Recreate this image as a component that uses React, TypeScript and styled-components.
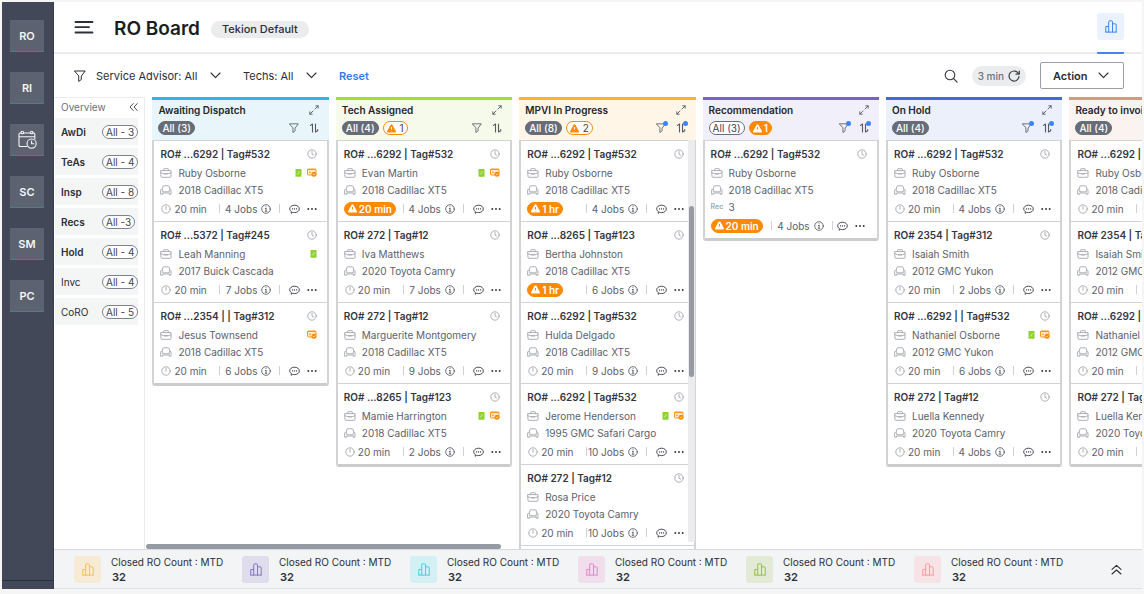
import React from "react";
import styled, { createGlobalStyle } from "styled-components";

const GlobalStyle = createGlobalStyle`
  * { box-sizing: border-box; }
  body {
    margin: 0;
    background: #f5f5f6;
    color: #2b2e35;
    font-family: Inter, "Open Sans", sans-serif;
    font-size: 10px;
    line-height: 16px;
  }
  button, select, input { font: inherit; color: inherit; }
  button { background: none; border: 0; padding: 0; cursor: pointer; }
  h1, h2, h3, p, ul, dl, dd { margin: 0; padding: 0; }
  ul { list-style: none; }
  svg { display: block; flex: none; }
`;

/* ---------- icons ---------- */

type IconProps = { w?: number; h?: number; sw?: number; box?: string; children?: React.ReactNode };

const Icon = ({ w = 12, h = w, sw = 1, box = `0 0 ${w} ${h}`, children }: IconProps) => (
  <svg width={w} height={h} viewBox={box} fill="none" stroke="currentColor" strokeWidth={sw} strokeLinecap="round" strokeLinejoin="round" aria-hidden="true">
    {children}
  </svg>
);

const MenuIcon = () => (
  <Icon w={20} h={14} sw={1.8}><path d="M1.5 2h17M1.5 7.200h13.500M1.5 12.500h17" /></Icon>
);
const FunnelIcon = ({ size = 12 }: { size?: number }) => (
  <Icon w={size} box="0 0 12 12" sw={1}><path d="M.8 1h10.4L7.3 6.2v3.3l-2.6 1.9V6.2z" /></Icon>
);
const ChevronIcon = () => <Icon w={11} h={7} sw={1.1}><path d="M1 1l4.5 4.7L10 1" /></Icon>;
const CollapseIcon = () => <Icon w={9} h={8} sw={0.9}><path d="M4.2.6L1 4l3.2 3.4M8.2.6L5 4l3.2 3.4" /></Icon>;
const ExpandUpIcon = () => <Icon w={11} h={11} sw={1.1}><path d="M1 5.3l4.5-4 4.5 4M1 10l4.5-4L10 10" /></Icon>;
const SearchIcon = () => <Icon w={14} sw={1.1}><circle cx="6" cy="6" r="4.8" /><path d="M9.5 9.5l3.6 3.6" /></Icon>;
const RefreshIcon = () => <Icon w={12} sw={1.2}><path d="M10.6 4A5 5 0 1 0 11 6.6M11.3 1v3.2H8" /></Icon>;
const BarsIcon = () => (
  <Icon w={12} h={13}><path d="M.8 12V6.5h2.9M3.7 12V1.8c0-.6.4-1 1-1h1.8c.6 0 1 .4 1 1V12M7.5 3.8h2.7c.6 0 1 .4 1 1V12M.8 12.1h10.4" /></Icon>
);
const CalendarIcon = () => (
  <Icon w={19} h={19} sw={1.1}>
    <path d="M9 16.5H2.2c-.8 0-1.2-.5-1.2-1.2V4.2C1 3.500 1.500 3 2.200 3H3M5.500 3h7M15 3h.6c.8 0 1.200.5 1.200 1.200V9M1 6.800h15.800" />
    <circle cx="4.300" cy="2.500" r="1.300" /><circle cx="13.700" cy="2.500" r="1.300" />
    <circle cx="13.600" cy="13.600" r="4.600" /><path d="M13.600 11v2.800h2.200" />
  </Icon>
);
const ArrowsIcon = () => (
  <Icon w={10} sw={0.9}><path d="M6 4L9 1M6.800.8h2.400v2.400M4 6L1 9M.8 6.800v2.400h2.400" /></Icon>
);
const SortIcon = () => (
  <Icon w={10} sw={1.1}><path d="M1.500 2.400L3.500 1v8M6.500 1v8l2.200-1.300V6.500" /></Icon>
);
const ClockIcon = () => <Icon w={10} sw={0.9}><circle cx="5" cy="5" r="4.200" /><path d="M5 2.400v2.800l1.700.9" /></Icon>;
const TimerIcon = () => <Icon w={10} sw={0.9}><circle cx="5" cy="5" r="4.200" /><path d="M5 2.200v3" /></Icon>;
const CaseIcon = () => (
  <Icon w={12} h={10} sw={0.9}><path d="M1 2.600h10v6c0 .4-.3.700-.7.700H1.700c-.4 0-.7-.3-.7-.7zM3.600 2.500V1.200c0-.3.200-.5.500-.5h3.800c.3 0 .5.200.5.500v1.300M1 4.800c3 1.500 7 1.500 10 0M4.300 5.800h3.400" /></Icon>
);
const CarIcon = () => (
  <Icon w={12} h={10} sw={0.9}><path d="M2.200 4.300l.6-2.600c.1-.6.500-.9 1-.9h4.400c.5 0 .9.300 1 .9l.6 2.600M1 4.600c.8-.5 1.700-.2 1.700.8v1.400h6.600V5.400c0-1 .9-1.300 1.700-.8v4.600H9.300V8H2.700v1.200H1z" /></Icon>
);
const InfoIcon = () => <Icon w={10} sw={0.9}><circle cx="5" cy="5" r="4.300" /><path d="M5 4.500v2.700M4.300 4.500H5M4.200 7.200h1.600M5 2.600v.2" /></Icon>;
const ChatIcon = () => (
  <Icon w={11} h={10} sw={0.9}>
    <path d="M2.200 8.900l.1-1.500C1.300 6.800.7 5.900.7 4.900.7 2.800 2.800 1.200 5.500 1.200s4.800 1.600 4.800 3.700-2.100 3.700-4.800 3.700c-.5 0-1 0-1.400-.2z" />
    <path d="M3.500 4.900h.1M5.500 4.900h.1M7.500 4.900h.1" strokeWidth="1.200" />
  </Icon>
);
const DotsIcon = () => <Icon w={10} h={4} sw={1.900}><path d="M1.300 2h.01M5 2h.01M8.700 2h.01" /></Icon>;
const WarnIcon = () => (
  <svg width="9" height="9" viewBox="0 0 9 9" aria-hidden="true">
    <path d="M4.500.3c.4 0 .7.200.9.500l3.400 6.300c.4.800 0 1.500-.8 1.500H1C.200 8.600-.200 7.900.200 7.100L3.600.8c.2-.3.500-.5.900-.5z" fill="currentColor" />
    <path d="M4.500 3v2.600M4.500 6.900v.4" stroke="var(--mark)" strokeWidth="1.100" />
  </svg>
);
const QuoteIcon = () => (
  <svg width="7" height="8" viewBox="0 0 7 8" role="img" aria-label="Quote">
    <path d="M.5 0h6v8l-1-.6-1 .6-1-.6-1 .6-1-.6-1 .6z" fill="#8fd12f" />
    <path d="M2.300 5.400l2.400-3M2.300 2.600h.1M4.700 5.200h.1" stroke="#e9f8d4" strokeWidth=".8" />
  </svg>
);
const PartsIcon = () => (
  <svg width="10" height="9" viewBox="0 0 10 9" role="img" aria-label="Parts">
    <rect x=".5" y="1" width="8.500" height="6" rx="1" fill="#ffe9cf" stroke="#ff9416" />
    <path d="M.5 1.500h8.500M2 4.200h2" stroke="#ff9416" />
    <circle cx="7" cy="6.200" r="2.500" fill="#ff8a00" /><path d="M6 6.200l.8.8L8.200 5.500" stroke="#fff" strokeWidth=".7" fill="none" />
  </svg>
);

/* ---------- shell ---------- */

const Shell = styled.div`
  display: flex;
  height: 100vh;
  padding: 2px 2px 5px;
`;

const Sidebar = styled.nav`
  display: flex;
  flex-direction: column;
  align-items: flex-start;
  gap: 20px;
  flex: 0 0 52px;
  padding: 18px 8px 8px;
  background: #424857;
  border-right: 1px solid #373c49;
`;

const SideButton = styled.button`
  display: flex;
  align-items: center;
  justify-content: center;
  width: 34px;
  height: 32px;
  background: #5c626f;
  border-bottom: 1px solid #26917f;
  color: #f4f5f7;
  font-size: 11px;
  font-weight: 600;
`;

const SideRule = styled.hr`
  align-self: stretch;
  margin: auto -8px 0;
  border: 0;
  border-top: 1px solid #1e3440;
`;

const Main = styled.main`
  display: flex;
  flex-direction: column;
  flex: 1;
  min-width: 0;
  background: #fff;
`;

const Header = styled.header`
  display: flex;
  align-items: center;
  height: 52px;
  padding: 0 18px 0 20px;
  border-bottom: 2px solid #ebebed;
`;

const MenuButton = styled.button`
  color: #2b303b;
  margin-right: 20px;
`;

const Title = styled.h1`
  margin-right: 11px;
  padding-top: 3px;
  font-size: 19px;
  line-height: 24px;
  font-weight: 600;
  color: #1c1d21;
`;

const Tag = styled.span`
  display: flex;
  align-items: center;
  height: 17px;
  padding: 0 11px;
  margin-top: 4px;
  border-radius: 9px;
  background: #ebecee;
  font-size: 11px;
  font-weight: 500;
`;

const ReportTab = styled.button`
  display: flex;
  align-self: stretch;
  align-items: center;
  margin-left: auto;
  margin-bottom: -2px;
  padding-bottom: 1px;
  border-bottom: 2px solid #4285f4;
  border-radius: 1px;
`;

const Tile = styled.span<{ $color: string; $bg: string }>`
  display: grid;
  place-items: center;
  width: 27px;
  height: 27px;
  border-radius: 3px;
  color: ${(p) => p.$color};
  background: ${(p) => p.$bg};
`;

const Toolbar = styled.div`
  display: flex;
  align-items: center;
  flex: 0 0 43px;
  padding: 0 18px 0 20px;
`;

const FilterLabel = styled.label`
  display: flex;
  align-items: center;
  gap: 10px;
  margin-right: 22px;
  font-size: 11px;
  > svg:last-child { margin-left: 2px; }
`;

const FilterSelect = styled.select`
  appearance: none;
  border: 0;
  padding: 0;
  background: transparent;
`;

const ResetButton = styled.button`
  color: #2f7de9;
  font-size: 11px;
  font-weight: 600;
`;

const Tools = styled.div`
  display: flex;
  align-items: center;
  gap: 14px;
  margin-left: auto;
`;

const RefreshButton = styled.button`
  display: flex;
  align-items: center;
  gap: 4px;
  height: 20px;
  padding: 0 6px;
  border-radius: 10px;
  background: #ebecee;
  color: #6b717c;
  font-weight: 500;
  svg { color: #3c414b; }
`;

const ActionButton = styled.button`
  display: flex;
  align-items: center;
  justify-content: space-between;
  width: 84px;
  height: 27px;
  padding: 0 14px 0 12px;
  border: 1px solid #9a9ea8;
  border-radius: 2px;
  font-size: 11px;
  font-weight: 600;
`;

const Body = styled.div`
  position: relative;
  display: flex;
  flex: 1;
  min-height: 0;
`;

/* ---------- overview ---------- */

const Overview = styled.aside`
  flex: 0 0 91px;
  padding: 0 6px 0 1px;
  border-top: 1px solid #ececee;
  border-right: 1px solid #ececee;
`;

const OverviewHead = styled.div`
  display: flex;
  align-items: center;
  justify-content: space-between;
  height: 20px;
  padding: 0 0 3px 6px;
  color: #6b717c;
`;

const OverviewList = styled.ul`
  display: grid;
  gap: 3px;
`;

const OverviewRow = styled.li<{ $strong: boolean }>`
  display: grid;
  grid-template-columns: 41px auto;
  align-items: center;
  justify-content: start;
  height: 27px;
  padding-left: 6px;
  background: #f4f5f5;
  font-weight: ${(p) => (p.$strong ? 600 : 400)};
`;

const Count = styled.span`
  height: 14px;
  padding: 0 3px;
  border: 1px solid #7d828d;
  border-radius: 7px;
  background: #fff;
  line-height: 12px;
  font-weight: 400;
  white-space: nowrap;
  color: #3f444e;
`;

/* ---------- board ---------- */

const Board = styled.div`
  display: flex;
  align-items: flex-start;
  gap: 7px;
  flex: 1;
  min-width: 0;
  margin-left: 7px;
  overflow: hidden;
`;

const Column = styled.section`
  position: relative;
  flex: 0 0 calc((100% - 37px) / 5.4);
`;

const ColumnHead = styled.header<{ $color: string; $bg: string }>`
  display: grid;
  align-content: start;
  gap: 2px;
  height: 43px;
  padding: 2px 10px 0 6px;
  border-top: 3px solid ${(p) => p.$color};
  background: ${(p) => p.$bg};
`;

const HeadRow = styled.div`
  display: flex;
  align-items: center;
  gap: 4px;
  height: 16px;
`;

const ColumnTitle = styled.h2`
  flex: 1;
  white-space: nowrap;
  font-size: 10px;
  line-height: 16px;
  font-weight: 600;
  color: #22252c;
`;

const HeadTools = styled.div`
  display: flex;
  gap: 10px;
  margin-left: auto;
  color: #555a66;
`;

const HeadButton = styled.button`
  position: relative;
`;

const ActiveDot = styled.i`
  position: absolute;
  top: -2px;
  right: -2px;
  width: 5px;
  height: 5px;
  border-radius: 50%;
  background: #3d84f7;
`;

const Pill = styled.span<{ $solid: boolean; $tone: "grey" | "orange" }>`
  --tone: ${(p) => (p.$tone === "grey" ? "#666d78" : "#ff8a00")};
  --mark: ${(p) => (p.$solid ? "var(--tone)" : "#fff")};
  display: flex;
  align-items: center;
  gap: ${(p) => (p.$solid ? 2 : 4)}px;
  height: 14px;
  padding: 0 3px;
  border: 1px solid var(--tone);
  border-radius: 7px;
  background: ${(p) => (p.$solid ? "var(--tone)" : "#fff")};
  color: ${(p) => (p.$solid ? "#fff" : "#3f444e")};
  font-weight: ${(p) => (!p.$solid ? 400 : p.$tone === "grey" ? 500 : 600)};
  white-space: nowrap;
  svg { color: ${(p) => (p.$solid ? "#fff" : "var(--tone)")}; }
`;

const LatePill = styled(Pill)`
  justify-self: start;
`;

const CardList = styled.ul<{ $more: boolean }>`
  border: 2px solid #d2d3d5;
  border-top-width: 1px;
  border-bottom: 3px solid #cbccce;
  border-radius: 0 0 3px 3px;
  &::after {
    content: "";
    display: ${(p) => (p.$more ? "block" : "none")};
    height: 12px;
    border-top: 1px solid #d2d3d5;
  }
`;

const CardItem = styled.li`
  padding: 4px 9px 4px 6px;
  background: #fff;
  & + & { border-top: 1px solid #d2d3d5; }
`;

const CardTop = styled.div`
  display: flex;
  align-items: center;
  justify-content: space-between;
  height: 19px;
  padding: 0 1px 1px 0;
  color: #a3a7ae;
`;

const CardTitle = styled.h3`
  white-space: nowrap;
  font-size: 10px;
  line-height: 16px;
  font-weight: 600;
  color: #33363f;
`;

const Line = styled.div`
  display: grid;
  grid-template-columns: 12px 1fr auto;
  align-items: center;
  column-gap: 6px;
  height: 17px;
  padding-right: 1px;
  color: #5c616b;
  white-space: nowrap;
  > svg { color: #a3a7ae; }
`;

const Marks = styled.span`
  display: flex;
  align-items: center;
  gap: 5px;
`;

const RecLabel = styled.span`
  font-size: 7px;
  font-weight: 600;
  color: #a3a7ae;
`;

const Foot = styled.div<{ $close: boolean }>`
  display: grid;
  grid-template-columns: ${(p) => (p.$close ? "60px 53px 13px 18px 10px" : "59px 52px 18px 18px 10px")};
  align-items: center;
  height: 19px;
  padding-top: 2px;
  color: #5c616b;
`;

const Time = styled.span`
  display: flex;
  align-items: center;
  gap: 3px;
  padding-left: 1px;
  white-space: nowrap;
  svg { color: #a3a7ae; }
`;

const Jobs = styled.span`
  display: flex;
  align-items: center;
  justify-content: flex-end;
  gap: 4px;
  height: 9px;
  border-left: 1px solid #cfd1d5;
  white-space: nowrap;
`;

const Divider = styled.i`
  width: 9px;
  height: 9px;
  border-right: 1px solid #cfd1d5;
`;

const InkButton = styled.button`
  color: #33363f;
`;

const ListScroll = styled.div`
  position: absolute;
  top: 43px;
  right: 1px;
  width: 7px;
  height: 402px;
  padding: 66px 1px 0;
  background: #ececee;
`;

const Thumb = styled.div`
  height: 171px;
  border-radius: 3px;
  background: #969ba3;
`;

const BoardThumb = styled.div`
  position: absolute;
  left: 92px;
  bottom: 0;
  width: 355px;
  height: 5px;
  border-radius: 3px;
  background: #969ba3;
`;

/* ---------- summary ---------- */

const Summary = styled.footer`
  display: flex;
  align-items: center;
  flex: 0 0 40px;
  padding: 0 20px;
  border-top: 1px solid #d8d9dc;
  border-bottom: 1px solid #e0e1e3;
  background: #f3f4f6;
`;

const Stat = styled.div`
  display: flex;
  align-items: center;
  gap: 10px;
  flex: 0 1 168px;
`;

const StatText = styled.dl`
  padding-top: 1px;
  line-height: 15px;
  white-space: nowrap;
  dd { font-size: 11px; font-weight: 600; padding-left: 1px; }
`;

const SummaryToggle = styled.button`
  margin-left: auto;
`;

/* ---------- data ---------- */

type Mark = "quote" | "parts";
type CardData = { ro: string; name: string; car: string; jobs: number; time?: string; late?: boolean; marks?: Mark[]; rec?: number };
type ColumnData = {
  title: string; count: number; color: string; bg: string; cards: CardData[];
  alerts?: number; alertsOn?: boolean; filtered?: boolean; scroll?: boolean;
};

const card = (ro: string, name: string, car: string, jobs: number, extra: Partial<CardData> = {}): CardData => ({ ro, name, car, jobs, ...extra });
const both: Mark[] = ["quote", "parts"];

const holdCards = [
  card("RO# ...6292 | Tag#532", "Ruby Osborne", "2018 Cadillac XT5", 4),
  card("RO# 2354 | Tag#312", "Isaiah Smith", "2012 GMC Yukon", 2),
  card("RO# ...6292 | | Tag#532", "Nathaniel Osborne", "2012 GMC Yukon", 6, { marks: both }),
  card("RO# 272 | Tag#12", "Luella Kennedy", "2020 Toyota Camry", 4),
];

const columns: ColumnData[] = [
  {
    title: "Awaiting Dispatch", count: 3, color: "#2bb8e4", bg: "#e8f6fb",
    cards: [
      card("RO# ...6292 | Tag#532", "Ruby Osborne", "2018 Cadillac XT5", 4, { marks: both }),
      card("RO# ...5372 | Tag#245", "Leah Manning", "2017 Buick Cascada", 7, { marks: ["quote"] }),
      card("RO# ...2354 | | Tag#312", "Jesus Townsend", "2018 Cadillac XT5", 6, { marks: ["parts"] }),
    ],
  },
  {
    title: "Tech Assigned", count: 4, color: "#a6d840", bg: "#f5faea", alerts: 1,
    cards: [
      card("RO# ...6292 | Tag#532", "Evan Martin", "2018 Cadillac XT5", 4, { late: true, marks: both }),
      card("RO# 272 | Tag#12", "Iva Matthews", "2020 Toyota Camry", 7),
      card("RO# 272 | Tag#12", "Marguerite Montgomery", "2018 Cadillac XT5", 9),
      card("RO# ...8265 | Tag#123", "Mamie Harrington", "2018 Cadillac XT5", 2, { marks: both }),
    ],
  },
  {
    title: "MPVI In Progress", count: 8, color: "#fcb03b", bg: "#fff6e8", alerts: 2, filtered: true, scroll: true,
    cards: [
      card("RO# ...6292 | Tag#532", "Ruby Osborne", "2018 Cadillac XT5", 4, { late: true, time: "1 hr" }),
      card("RO# ...8265 | Tag#123", "Bertha Johnston", "2018 Cadillac XT5", 6, { late: true, time: "1 hr" }),
      card("RO# ...6292 | Tag#532", "Hulda Delgado", "2018 Cadillac XT5", 9),
      card("RO# ...6292 | Tag#532", "Jerome Henderson", "1995 GMC Safari Cargo", 10, { marks: both }),
      card("RO# 272 | Tag#12", "Rosa Price", "2020 Toyota Camry", 10),
    ],
  },
  {
    title: "Recommendation", count: 3, color: "#7a62c5", bg: "#f1eff9", alerts: 1, alertsOn: true, filtered: true,
    cards: [card("RO# ...6292 | Tag#532", "Ruby Osborne", "2018 Cadillac XT5", 4, { late: true, rec: 3 })],
  },
  { title: "On Hold", count: 4, color: "#426ad0", bg: "#ebf0fa", filtered: true, cards: holdCards },
  { title: "Ready to invoice", count: 4, color: "#d09b82", bg: "#faf3f0", cards: holdCards },
];

const overview = [
  { name: "AwDi", count: "All - 3", strong: true },
  { name: "TeAs", count: "All - 4", strong: true },
  { name: "Insp", count: "All - 8", strong: true },
  { name: "Recs", count: "All -3", strong: true },
  { name: "Hold", count: "All - 4", strong: true },
  { name: "Invc", count: "All - 4", strong: false },
  { name: "CoRO", count: "All - 5", strong: false },
];

const stats = [
  { color: "#f9be55", bg: "#f7ebd6" },
  { color: "#8673cb", bg: "#dfdcee" },
  { color: "#37d6e6", bg: "#d3f0f5" },
  { color: "#e383cb", bg: "#f1deec" },
  { color: "#98c046", bg: "#e2ead5" },
  { color: "#fb9a9a", bg: "#f7e3e5" },
];

/* ---------- parts ---------- */

const RoCard = ({ data }: { data: CardData }) => (
  <CardItem>
    <CardTop>
      <CardTitle>{data.ro}</CardTitle>
      <ClockIcon />
    </CardTop>
    <Line>
      <CaseIcon />
      <span>{data.name}</span>
      <Marks>{data.marks?.map((m) => (m === "quote" ? <QuoteIcon key={m} /> : <PartsIcon key={m} />))}</Marks>
    </Line>
    <Line>
      <CarIcon />
      <span>{data.car}</span>
    </Line>
    {data.rec !== undefined && (
      <Line>
        <RecLabel>Rec</RecLabel>
        <span>{data.rec}</span>
      </Line>
    )}
    <Foot $close={data.rec !== undefined}>
      {data.late ? (
        <LatePill $solid $tone="orange"><WarnIcon />{data.time ?? "20 min"}</LatePill>
      ) : (
        <Time><TimerIcon />{data.time ?? "20 min"}</Time>
      )}
      <Jobs>{data.jobs} Jobs <InfoIcon /></Jobs>
      <Divider />
      <InkButton aria-label="Messages"><ChatIcon /></InkButton>
      <InkButton aria-label="More"><DotsIcon /></InkButton>
    </Foot>
  </CardItem>
);

const BoardColumn = ({ data }: { data: ColumnData }) => (
  <Column>
    <ColumnHead $color={data.color} $bg={data.bg}>
      <HeadRow>
        <ColumnTitle>{data.title}</ColumnTitle>
        <HeadTools><HeadButton aria-label="Expand"><ArrowsIcon /></HeadButton></HeadTools>
      </HeadRow>
      <HeadRow>
        <Pill $solid={!data.alertsOn} $tone="grey">All ({data.count})</Pill>
        {data.alerts && <Pill $solid={!!data.alertsOn} $tone="orange"><WarnIcon />{data.alerts}</Pill>}
        <HeadTools>
          <HeadButton aria-label="Filter"><FunnelIcon size={10} />{data.filtered && <ActiveDot />}</HeadButton>
          <HeadButton aria-label="Sort"><SortIcon />{data.filtered && <ActiveDot />}</HeadButton>
        </HeadTools>
      </HeadRow>
    </ColumnHead>
    <CardList $more={!!data.scroll}>
      {data.cards.map((c, i) => <RoCard key={i} data={c} />)}
    </CardList>
    {data.scroll && <ListScroll><Thumb /></ListScroll>}
  </Column>
);

export default function App() {
  return (
    <>
      <GlobalStyle />
      <Shell>
        <Sidebar aria-label="Modules">
          <SideButton>RO</SideButton>
          <SideButton>RI</SideButton>
          <SideButton aria-label="Schedule"><CalendarIcon /></SideButton>
          <SideButton>SC</SideButton>
          <SideButton>SM</SideButton>
          <SideButton>PC</SideButton>
          <SideRule />
        </Sidebar>
        <Main>
          <Header>
            <MenuButton aria-label="Menu"><MenuIcon /></MenuButton>
            <Title>RO Board</Title>
            <Tag>Tekion Default</Tag>
            <ReportTab aria-label="Reports"><Tile $color="#3f82f0" $bg="#e9f2fe"><BarsIcon /></Tile></ReportTab>
          </Header>
          <Toolbar>
            <FilterLabel>
              <FunnelIcon />
              <FilterSelect aria-label="Service advisor"><option>Service Advisor: All</option></FilterSelect>
              <ChevronIcon />
            </FilterLabel>
            <FilterLabel>
              <FilterSelect aria-label="Techs"><option>Techs: All</option></FilterSelect>
              <ChevronIcon />
            </FilterLabel>
            <ResetButton>Reset</ResetButton>
            <Tools>
              <InkButton aria-label="Search"><SearchIcon /></InkButton>
              <RefreshButton>3 min <RefreshIcon /></RefreshButton>
              <ActionButton>Action <ChevronIcon /></ActionButton>
            </Tools>
          </Toolbar>
          <Body>
            <Overview>
              <OverviewHead>Overview <InkButton aria-label="Collapse"><CollapseIcon /></InkButton></OverviewHead>
              <OverviewList>
                {overview.map((o) => (
                  <OverviewRow key={o.name} $strong={o.strong}>{o.name}<Count>{o.count}</Count></OverviewRow>
                ))}
              </OverviewList>
            </Overview>
            <Board>
              {columns.map((c) => <BoardColumn key={c.title} data={c} />)}
            </Board>
            <BoardThumb />
          </Body>
          <Summary>
            {stats.map((s) => (
              <Stat key={s.color}>
                <Tile $color={s.color} $bg={s.bg}><BarsIcon /></Tile>
                <StatText><dt>Closed RO Count : MTD</dt><dd>32</dd></StatText>
              </Stat>
            ))}
            <SummaryToggle aria-label="Show more"><ExpandUpIcon /></SummaryToggle>
          </Summary>
        </Main>
      </Shell>
    </>
  );
}
